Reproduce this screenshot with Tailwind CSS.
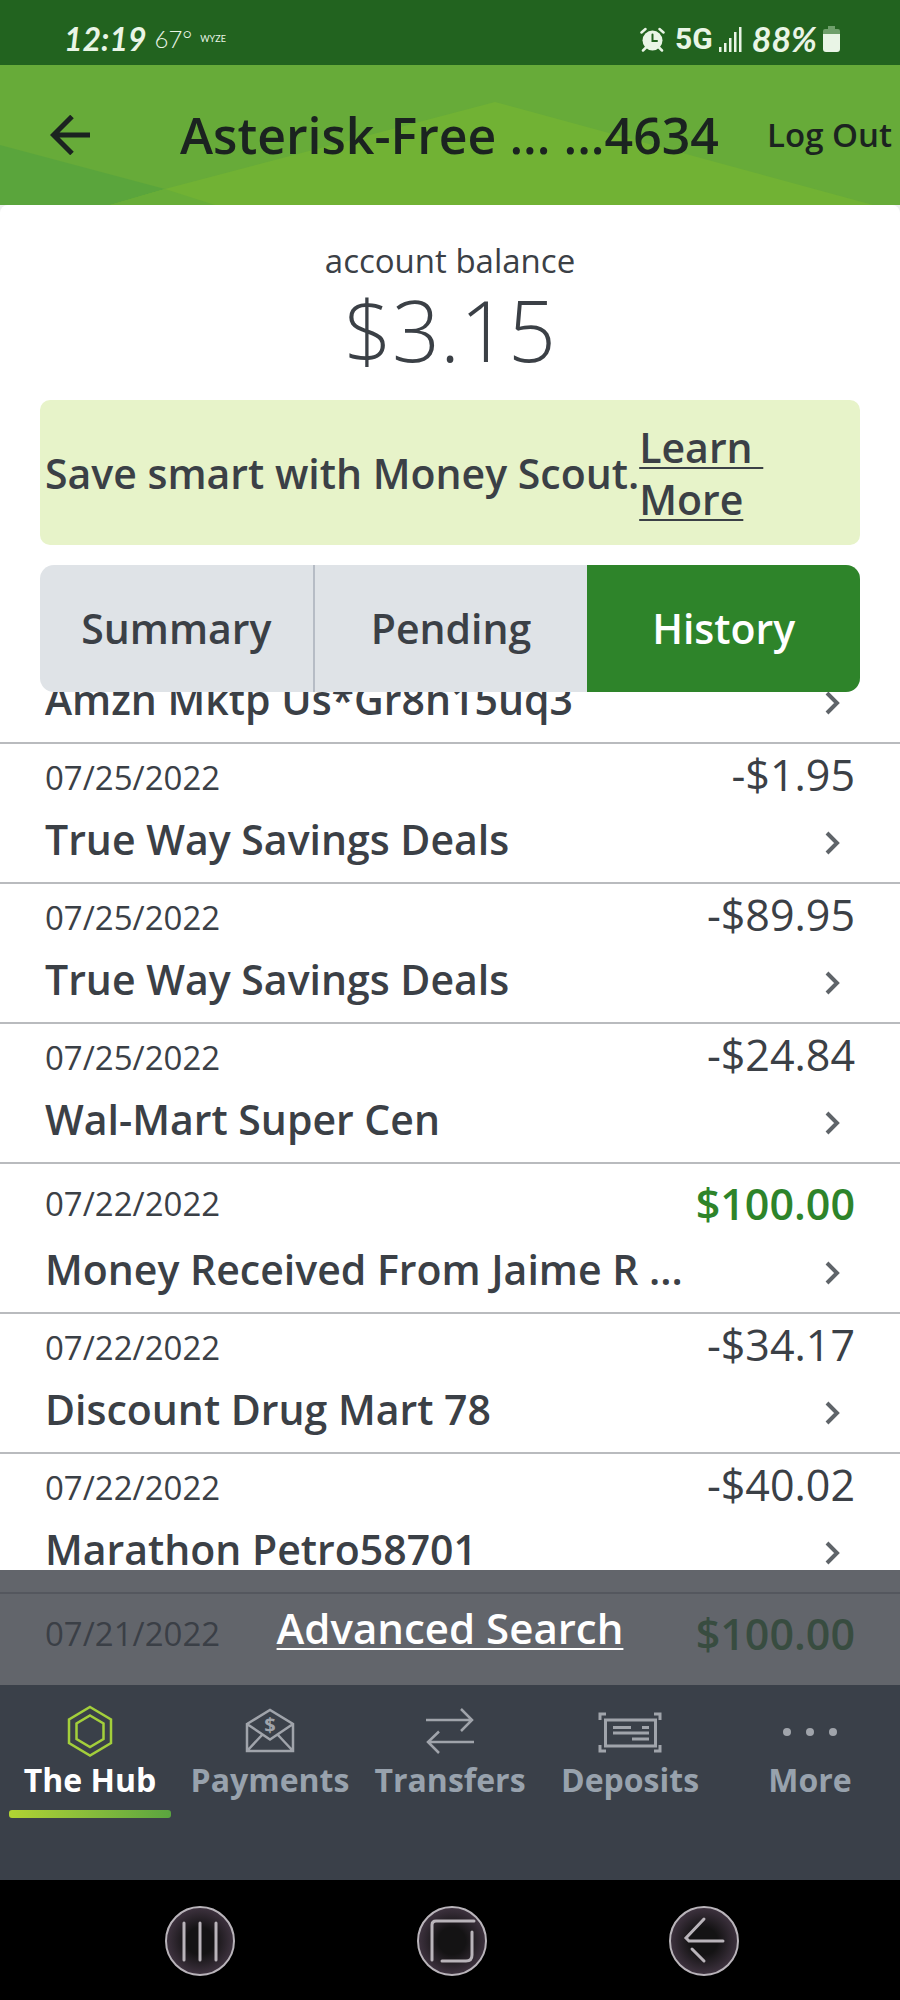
<!DOCTYPE html>
<html lang="en">
<head>
    <meta charset="UTF-8">
    <meta name="viewport" content="width=device-width, initial-scale=1.0">
    <title>Account History</title>
    <script src="https://cdn.jsdelivr.net/npm/@tailwindcss/browser@4"></script>
</head>
<body class="bg-white text-[#3b4046] font-['Open_Sans','Noto_Sans',sans-serif] h-screen flex flex-col">

    <!-- status bar -->
    <div class="bg-[#22631f] text-[#e9f5e6] h-[65px] shrink-0 flex items-end justify-between pl-16 pr-[60px] pb-[10px]">
        <div class="flex items-center gap-2">
            <span class="font-['Lato',sans-serif] italic font-bold text-[32px] leading-8">12:19</span>
            <span class="font-['Lato',sans-serif] font-light text-[24px] leading-8">67°</span>
            <span class="font-['Lato',sans-serif] text-[9px] leading-8">WYZE</span>
        </div>
        <div class="flex items-center gap-[6px]">
            <svg class="w-[25px] h-[25px] mr-1" viewBox="0 0 25 25" fill="none" stroke="currentColor" stroke-linecap="round">
                <circle cx="12.5" cy="13.500" r="10" fill="currentColor" stroke="none"/>
                <path d="M1.500 5.500 L5.500 2 M23.500 5.500 L19.500 2 M3 23.500 L6 20.500 M22 23.500 L19 20.500" stroke-width="2.500"/>
                <path d="M12.500 7.500 V14 H17" stroke="#22631f" stroke-width="2"/>
            </svg>
            <span class="font-['Liberation_Sans_Narrow','Roboto',sans-serif] font-bold text-[30px] leading-8">5G</span>
            <svg class="w-[23px] h-[25px]" viewBox="0 0 23 25" fill="currentColor">
                <path d="M0 20h2.500v5H0zM5 16h2.500v9H5zM10 11h2.500v14H10zM15 5h2.500v20H15zM20 0h2.500v25H20z"/>
            </svg>
            <span class="font-['Lato',sans-serif] italic font-bold text-[34px] leading-8 ml-1">88%</span>
            <svg class="w-[17px] h-[26px]" viewBox="0 0 17 26">
                <path d="M5 0h7v3h3a2 2 0 0 1 2 2v4H0V5a2 2 0 0 1 2-2h3z" fill="#6f9f6b"/>
                <path d="M0 8h17v15a3 3 0 0 1-3 3H3a3 3 0 0 1-3-3z" fill="currentColor"/>
            </svg>
        </div>
    </div>

    <!-- header -->
    <header class="relative bg-[#67ab39] text-[#1b2320] h-[140px] shrink-0 flex items-center pl-[50px] pr-2">
        <svg class="absolute inset-0 w-full h-full" viewBox="0 0 900 140" preserveAspectRatio="none">
            <path d="M0 80 L165 124 L215 140 H0z" fill="#5aa53c"/>
            <path d="M110 140 L165 124 L495 37 L873 140z" fill="#71b234"/>
            <path d="M110 140 L165 124 L215 140z" fill="#68ad38"/>
        </svg>
        <button class="relative" aria-label="Back">
            <svg class="w-10 h-10" viewBox="0 0 40 40" fill="none" stroke="currentColor" stroke-width="5">
                <path d="M40 20 H4 M22 1.500 L3.500 20 L22 38.500"/>
            </svg>
        </button>
        <h1 class="relative flex-1 pl-[90px] font-semibold text-[50px] leading-[60px] whitespace-pre">Asterisk-Free ... ...4634</h1>
        <a href="#" class="relative font-semibold text-[33px]">Log Out</a>
    </header>

    <!-- balance -->
    <div class="bg-[#eef0f1] shrink-0">
        <div class="bg-white rounded-t-lg text-center pt-8">
            <p class="text-[33px] leading-[48px]">account balance</p>
            <p class="font-light text-[84px] leading-[90px]">$3.15</p>
        </div>
    </div>

    <div class="px-10 pt-[25px] shrink-0">
        <div class="bg-[#e7f3c9] rounded-[10px] h-[145px] flex items-center pl-[5px] font-semibold text-[41px] leading-[52px]">
            <p class="whitespace-nowrap">Save smart with Money Scout.</p>
            <a href="#" class="underline decoration-2 underline-offset-4 w-32 whitespace-pre">Learn <br>More</a>
        </div>
        <div class="mt-5 h-[127px] flex rounded-[14px] overflow-hidden font-semibold text-[41px] bg-[#dfe3e7]">
            <button class="flex-1 border-r-2 border-[#b6bcc5]">Summary</button>
            <button class="flex-1">Pending</button>
            <button class="flex-1 bg-[#2e842a] text-white">History</button>
        </div>
    </div>

    <!-- transactions, scrolled under the tabs -->
    <main class="relative flex-1 min-h-0 overflow-hidden">
        <ul id="transactions" class="-mt-[88px]"></ul>
        <div class="absolute inset-x-0 bottom-0 h-[115px] bg-[#3b3f46]/80 flex items-center justify-center">
            <a href="#" class="text-white font-semibold text-[42px] underline decoration-2 underline-offset-4">Advanced Search</a>
        </div>
    </main>

    <!-- tab bar -->
    <nav class="bg-[#3a4049] text-[#98a2ad] h-[195px] shrink-0 grid grid-cols-5 pt-5 font-bold text-[32px] leading-[46px] text-center">
        <a href="#" class="text-white flex flex-col items-center px-[9px]">
            <svg class="w-[52px] h-[52px]" viewBox="0 0 52 52" fill="none" stroke="#a3cf3b" stroke-width="2.500">
                <path d="M26 2 L47 14.500 V38 L26 50.500 L5 38 V14.500z"/>
                <path d="M26 10.500 L39.500 18.500 V34 L26 42 L12.500 34 V18.500z"/>
            </svg>
            <span>The Hub</span>
            <span class="w-full h-2 mt-[7px] rounded-[3px] bg-linear-to-r from-[#b1d332] to-[#5aa53f]"></span>
        </a>
        <a href="#" class="flex flex-col items-center">
            <svg class="w-[52px] h-[52px]" viewBox="0 0 52 52" fill="none" stroke="#a0a4ab" stroke-width="2.500">
                <path d="M3 19 L26 5 L49 19 V46 H3z M3 19 L26 34.500 L49 19 M3 46 L18 30 M49 46 L34 30"/>
                <text x="26" y="27" text-anchor="middle" font-size="20" fill="#a0a4ab" stroke="none">$</text>
            </svg>
            <span>Payments</span>
        </a>
        <a href="#" class="flex flex-col items-center">
            <svg class="w-[52px] h-[52px]" viewBox="0 0 52 52" fill="none" stroke="#a0a4ab" stroke-width="2.500">
                <path d="M2 15 H48 M37 4 L48 15 L37 26 M50 37 H4 M15 26.500 L4 37 L15 48"/>
            </svg>
            <span>Transfers</span>
        </a>
        <a href="#" class="flex flex-col items-center">
            <svg class="w-[66px] h-[52px]" viewBox="0 0 66 52" fill="none" stroke="#a0a4ab" stroke-width="3">
                <path d="M3 15 V9 H9 M57 9 H63 V15 M63 40 V46 H57 M9 46 H3 V40"/>
                <path d="M8.500 15 H58.500 V41 H8.500z M16 22.500 H34 M45 22.500 H52 M16 28 H52 M35 34 H52"/>
            </svg>
            <span>Deposits</span>
        </a>
        <a href="#" class="flex flex-col items-center">
            <svg class="w-[56px] h-[52px]" viewBox="0 0 56 52" fill="#a0a4ab">
                <circle cx="5" cy="27" r="4"/>
                <circle cx="28" cy="27" r="4"/>
                <circle cx="51" cy="27" r="4"/>
            </svg>
            <span>More</span>
        </a>
    </nav>

    <!-- system buttons -->
    <footer class="bg-black h-[120px] shrink-0 flex items-center justify-between pl-[165px] pr-[161px] pt-[2px]">
        <button aria-label="Recent apps">
            <svg class="w-[70px] h-[70px]" viewBox="0 0 70 70" fill="none" stroke="#b9b4ba" stroke-width="2" stroke-linecap="round">
                <defs>
                    <radialGradient id="glass">
                        <stop offset="40%" stop-color="#141314"/>
                        <stop offset="100%" stop-color="#3f3340"/>
                    </radialGradient>
                </defs>
                <circle cx="35" cy="35" r="34" fill="url(#glass)"/>
                <path d="M19 17 V54 M35 17 V54 M51 17 V54" stroke-width="3"/>
            </svg>
        </button>
        <button aria-label="Home">
            <svg class="w-[70px] h-[70px]" viewBox="0 0 70 70" fill="none" stroke="#b9b4ba" stroke-width="2" stroke-linecap="round">
                <circle cx="35" cy="35" r="34" fill="url(#glass)"/>
                <path d="M15 54 V19 Q15 15 19 15 H57 M55 26 V49 Q55 55 49 55 H25" stroke-width="3"/>
            </svg>
        </button>
        <button aria-label="Back">
            <svg class="w-[70px] h-[70px]" viewBox="0 0 70 70" fill="none" stroke="#b9b4ba" stroke-width="2" stroke-linecap="round">
                <circle cx="35" cy="35" r="34" fill="url(#glass)"/>
                <path d="M35 13 L17 32 L20 35 H54 M23 43 L35 55" stroke-width="3"/>
            </svg>
        </button>
    </footer>

    <script>
        const transactions = [
            { date: '', amount: '', name: 'Amzn Mktp Us*Gr8h15uq3' },
            { date: '07/25/2022', amount: '-$1.95', name: 'True Way Savings Deals' },
            { date: '07/25/2022', amount: '-$89.95', name: 'True Way Savings Deals' },
            { date: '07/25/2022', amount: '-$24.84', name: 'Wal-Mart Super Cen' },
            { date: '07/22/2022', amount: '$100.00', name: 'Money Received From Jaime R ...', credit: true },
            { date: '07/22/2022', amount: '-$34.17', name: 'Discount Drug Mart 78' },
            { date: '07/22/2022', amount: '-$40.02', name: 'Marathon Petro58701' },
            { date: '07/21/2022', amount: '$100.00', name: '', credit: true }
        ];

        const list = document.getElementById('transactions');

        transactions.forEach(item => {
            const row = document.createElement('li');
            row.className = item.credit
                ? 'border-b-2 border-[#b9bbbe] px-[45px] pt-[6px] pb-[10px]'
                : 'border-b-2 border-[#b9bbbe] px-[45px] pb-[10px]';
            const amountClass = item.credit
                ? 'h-16 leading-[68px] text-[43px] font-semibold text-[#2e842a]'
                : 'h-[60px] leading-[62px] text-[43px]';
            row.innerHTML = `
                <div class="flex items-start justify-between">
                    <span class="text-[33px] h-[60px] leading-[68px]">${item.date}</span>
                    <span class="${amountClass}">${item.amount}</span>
                </div>
                <a href="#" class="flex items-start justify-between pr-[15px] h-[68px]">
                    <span class="font-semibold text-[41px] leading-[70px]">${item.name}</span>
                    <svg class="w-4 h-6 mt-[27px]" viewBox="0 0 16 24" fill="none" stroke="#5f6469" stroke-width="4">
                        <path d="M3 2 L13 12 L3 22"/>
                    </svg>
                </a>
            `;
            list.appendChild(row);
        });
    </script>
</body>
</html>
